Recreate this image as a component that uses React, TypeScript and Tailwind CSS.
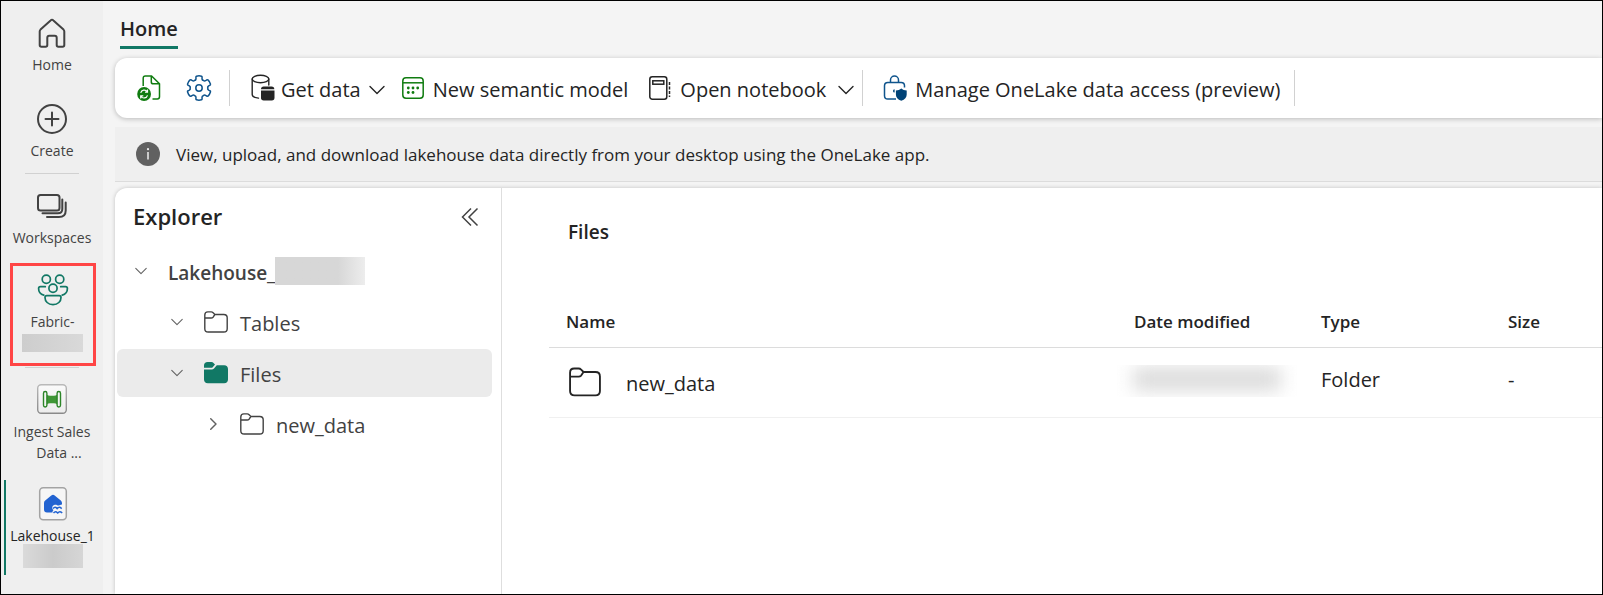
import type { ReactNode } from "react";

function HomeIcon() {
  return (
    <svg className="h-8 w-8" viewBox="0 0 32 32" fill="none" stroke="#424242" strokeWidth="2" strokeLinejoin="round">
      <path d="M14.600 3.400a2 2 0 0 1 2.800 0l10.100 9.200c.5.500.8 1.100.8 1.800V28c0 1.100-.6 1.700-1.700 1.700h-4.200c-1 0-1.700-.7-1.700-1.700v-7.300c0-1.300-.7-2-2-2h-5.400c-1.300 0-2 .7-2 2V28c0 1-.7 1.700-1.700 1.700H5.400c-1.100 0-1.700-.6-1.700-1.700V14.400c0-.7.3-1.300.8-1.800z" />
    </svg>
  );
}

function CreateIcon() {
  return (
    <svg className="h-8 w-8" viewBox="0 0 32 32" fill="none" stroke="#424242" strokeWidth="2" strokeLinecap="round">
      <circle cx="16" cy="16" r="14" />
      <path d="M16 9.500v13M9.500 16h13" />
    </svg>
  );
}

function WorkspacesIcon() {
  return (
    <svg className="h-8 w-8" viewBox="0 0 32 32" fill="none" stroke="#424242" strokeWidth="2" strokeLinecap="round">
      <rect x="2" y="5" width="21.500" height="15.500" rx="2.500" />
      <path d="M26.300 9.500v9.500c0 2.800-1.700 4.300-4.500 4.300H6.500M29.700 12.500v8c0 4.200-2.700 6.600-6.800 6.600H11" />
    </svg>
  );
}

function PeopleIcon() {
  return (
    <svg className="h-8 w-8" viewBox="0 0 32 32" fill="none" stroke="#117865" strokeWidth="1.700" strokeLinecap="round" strokeLinejoin="round">
      <circle cx="9.300" cy="5.300" r="4.100" />
      <circle cx="22.700" cy="5.300" r="4.100" />
      <circle cx="16" cy="14.200" r="4.100" />
      <path d="M8.300 12.700H3.500c-1.300 0-1.900.8-1.900 1.900 0 3.300 1.900 5.800 5.200 6.500M23.700 12.700h4.800c1.300 0 1.900.8 1.900 1.900 0 3.300-1.900 5.800-5.200 6.500" />
      <path d="M9.800 21.600h12.400c1.100 0 1.800.7 1.800 1.800 0 4-3 7.200-8 7.200s-8-3.200-8-7.200c0-1.100.7-1.800 1.800-1.800z" />
    </svg>
  );
}

function PipelineIcon() {
  return (
    <svg className="h-8 w-8" viewBox="0 0 32 32" fill="none">
      <defs>
        <linearGradient id="tileFill" x1="0" y1="0" x2="0" y2="1">
          <stop offset="0" stopColor="#fafafa" />
          <stop offset="1" stopColor="#ececec" />
        </linearGradient>
        <linearGradient id="tileEdge" x1="0" y1="0" x2="0" y2="1">
          <stop offset="0" stopColor="#b9b9b9" />
          <stop offset="1" stopColor="#8a8a8a" />
        </linearGradient>
      </defs>
      <rect x="1.700" y="1.700" width="28.600" height="28.600" rx="3.500" fill="url(#tileFill)" stroke="url(#tileEdge)" strokeWidth="1.400" />
      <path d="M10 11.500c1.500 1 3 1.300 6 1.300s4.500-.3 6-1.300v10c-1.500-1-3-1.300-6-1.300s-4.500.3-6 1.300z" fill="#3f9636" />
      <rect x="7.500" y="8.500" width="3.400" height="15.500" rx="1.700" fill="#f2f7f1" stroke="#2c8528" strokeWidth="1.400" />
      <rect x="21.100" y="8.500" width="3.400" height="15.500" rx="1.700" fill="#f2f7f1" stroke="#2c8528" strokeWidth="1.400" />
    </svg>
  );
}

function LakehouseIcon() {
  return (
    <svg className="h-9 w-8" viewBox="0 0 32 36" fill="none">
      <rect x="2.700" y="1.700" width="26.600" height="32" rx="3.500" fill="#f6f6f6" stroke="#a3a3a3" strokeWidth="1.500" />
      <path d="M14.300 9.500a2.600 2.600 0 0 1 3.400 0l6.100 5c.8.700 1.200 1.500 1.200 2.500v1.600c-1.300-.2-2 .9-3.300.9-1.600 0-2.200-1.100-4-.7-1.500.4-2.500 1.500-2.500 3 0 1 .6 1.800 1.400 2.200-.8.500-1.100 1.200-1.100 2.500H10c-1.900 0-3-1.100-3-3V17c0-1 .4-1.900 1.200-2.500z" fill="#2263d1" />
      <path d="M16 22.600c1.500-1.700 2.500-1.700 4.200 0 1.500-1.700 2.700-1.700 4.500 0M16.500 27c1.500-1.700 2.500-1.700 4.200 0 1.500-1.700 2.700-1.700 4.500 0" stroke="#2263d1" strokeWidth="1.500" />
    </svg>
  );
}

function RefreshFileIcon() {
  return (
    <svg className="h-7 w-6" viewBox="0 0 24 28" fill="none">
      <path d="M6.200 12V4.200c0-1.400.8-2.200 2.200-2.200h6.200l7.900 7.800v13c0 1.300-.8 2.200-2.200 2.200h-4.800M14.300 2.200v5.700c0 1.300.6 1.900 1.900 1.900h6" stroke="#107c10" strokeWidth="1.500" strokeLinejoin="round" />
      <circle cx="7.100" cy="20" r="6.900" fill="#107c10" />
      <path d="M3.700 18.800a3.700 3.700 0 0 1 6.500-1.300M10.500 15.500v2.600H8M10.500 21.300A3.700 3.700 0 0 1 4 22.500M3.700 24.500v-2.600h2.600" stroke="#fff" strokeWidth="1.200" />
    </svg>
  );
}

function gearPoint(radius: number, degrees: number) {
  const angle = ((degrees - 90) * Math.PI) / 180;
  return `${(16 + radius * Math.cos(angle)).toFixed(2)} ${(16 + radius * Math.sin(angle)).toFixed(2)}`;
}

const gearPath =
  [0, 60, 120, 180, 240, 300]
    .map(
      (tooth, index) =>
        `${index === 0 ? "M" : "L"}${gearPoint(12.1, tooth - 12)} Q${gearPoint(12.5, tooth)} ${gearPoint(12.1, tooth + 12)}` +
        ` Q${gearPoint(12.100, tooth + 15)} ${gearPoint(11.200, tooth + 16)} L${gearPoint(10.300, tooth + 17)}` +
        ` Q${gearPoint(8.300, tooth + 21)} ${gearPoint(8.900, tooth + 30)}` +
        ` Q${gearPoint(8.300, tooth + 39)} ${gearPoint(10.300, tooth + 43)}` +
        ` L${gearPoint(11.200, tooth + 44)} Q${gearPoint(12.100, tooth + 45)} ${gearPoint(12.100, tooth + 48)}`,
    )
    .join(" ") + "Z";

function GearIcon() {
  return (
    <svg className="h-8 w-8" viewBox="0 0 32 32" fill="none" stroke="#0f548c" strokeWidth="1.500" strokeLinejoin="round">
      <path d={gearPath} />
      <circle cx="16" cy="16" r="3.200" />
    </svg>
  );
}

function DatabaseIcon() {
  return (
    <svg className="h-7 w-6" viewBox="0 0 24 28" fill="none" stroke="#242424" strokeWidth="1.400">
      <ellipse cx="9.500" cy="5" rx="8.300" ry="3.700" />
      <path d="M1.200 5v15.500c0 1.900 2.600 3.300 6.300 3.600M17.800 5v6" strokeLinecap="round" />
      <path d="M10 15.200c0-1.800.9-2.700 2.700-2.700h7.900c1.800 0 2.700.9 2.700 2.700z" fill="#242424" stroke="none" />
      <path d="M10 16.500h13.500v7.300c0 1.800-.9 2.700-2.700 2.700h-8.100c-1.800 0-2.700-.9-2.700-2.700z" fill="#242424" stroke="none" />
    </svg>
  );
}

function SemanticModelIcon() {
  return (
    <svg className="h-6 w-6" viewBox="0 0 24 24" fill="none" stroke="#107c10" strokeWidth="1.500">
      <rect x="1.800" y="1.800" width="20.400" height="20.400" rx="3.200" />
      <path d="M1.800 6.800h20.400" />
      <g fill="#107c10" stroke="none">
        <circle cx="7.300" cy="12" r="1.400" />
        <circle cx="12" cy="12" r="1.400" />
        <circle cx="16.700" cy="12" r="1.400" />
        <circle cx="7.300" cy="16.500" r="1.400" />
        <circle cx="12" cy="16.500" r="1.400" />
      </g>
    </svg>
  );
}

function NotebookIcon() {
  return (
    <svg className="h-7 w-6" viewBox="0 0 24 28" fill="none" stroke="#242424" strokeWidth="1.500">
      <rect x="1.800" y="2.800" width="17" height="22.500" rx="2.500" />
      <rect x="4.800" y="6.800" width="11" height="3.400" />
      <path d="M21.500 8v15" strokeDasharray="3 1.500" />
    </svg>
  );
}

function LockShieldIcon() {
  return (
    <svg className="h-7 w-6" viewBox="0 0 24 28" fill="none" stroke="#0f548c" strokeWidth="1.500">
      <path d="M7.500 8.500V6a4 4 0 0 1 8 0v2.500" />
      <path d="M13 25H4.800c-2 0-3.300-1.300-3.300-3.300v-9.900c0-2 1.300-3.300 3.300-3.300h13.400c2 0 3.300 1.300 3.300 3.300v1.700" />
      <path d="M18.300 14.500c1.500 1.300 3.200 2 5.400 2v3.900c0 3-1.800 5-5.400 6.300-3.600-1.300-5.400-3.300-5.400-6.300v-3.900c2.200 0 3.900-.7 5.400-2z" fill="#004377" stroke="none" />
      <path d="M11.600 15.300v3.200a1.600 1.600 0 0 1 0-3.200z" fill="#004377" stroke="none" />
    </svg>
  );
}

function ChevronDown({ size = "mt-1 h-4 w-4" }: { size?: string }) {
  return (
    <svg className={size} viewBox="0 0 16 16" fill="none" stroke="currentColor" strokeWidth="1.400" strokeLinecap="round" strokeLinejoin="round">
      <path d="M1 4.500l7 7 7-7" />
    </svg>
  );
}

function ChevronRight() {
  return (
    <svg className="h-3 w-3" viewBox="0 0 16 16" fill="none" stroke="currentColor" strokeWidth="1.900" strokeLinecap="round" strokeLinejoin="round">
      <path d="M5 1l7 7-7 7" />
    </svg>
  );
}

function FolderIcon({ size, tone }: { size: string; tone: string }) {
  return (
    <svg className={size} viewBox="0 0 24 22" fill="none" stroke={tone} strokeWidth="1.400" strokeLinejoin="round">
      <path d="M.8 7V4C.8 2.100 2 .9 3.900.9h3.300c.8 0 1.400.3 1.900.8l1.800 1.800h8.900c2.100 0 3.400 1.300 3.400 3.300v10.900c0 2-1.300 3.300-3.400 3.300H4.200c-2.100 0-3.400-1.300-3.400-3.300zh6.400c.8 0 1.400-.3 1.900-.8l1.800-2.700" />
    </svg>
  );
}

function FolderFilledIcon() {
  return (
    <svg className="h-6 w-6" viewBox="0 0 24 22" fill="#117865">
      <path d="M0 5.800V3.500C0 1.400 1.400 0 3.500 0h4c.8 0 1.500.3 2 .9L11 2.600 8.700 5.200c-.4.400-.8.600-1.300.6z" />
      <path d="M0 7.500h7.700c.9 0 1.700-.4 2.300-1l2.800-3.200h7.400c2.300 0 3.800 1.500 3.800 3.700v10.500c0 2.300-1.500 3.800-3.800 3.800H3.800C1.500 21.300 0 19.800 0 17.500z" />
    </svg>
  );
}

function NavItem({ icon, children, className = "" }: { icon: ReactNode; children: ReactNode; className?: string }) {
  return (
    <button type="button" className={`flex w-full flex-col items-center text-sm leading-5 text-[#424242] ${className}`}>
      {icon}
      {children}
    </button>
  );
}

function TreeRow({
  label,
  icon,
  className,
  chevron,
  selected = false,
}: {
  label: string;
  icon: ReactNode;
  className: string;
  chevron: ReactNode;
  selected?: boolean;
}) {
  return (
    <li>
      <button
        type="button"
        aria-current={selected}
        className={`flex h-12 w-full items-center rounded-md text-[20px] text-[#424242] ${selected ? "bg-[#ebebeb]" : ""} ${className}`}
      >
        <span className="flex w-[33px] text-[#616161]">{chevron}</span>
        {icon}
        <span className="ml-3 pt-1">{label}</span>
      </button>
    </li>
  );
}

function Separator() {
  return <div className="h-9 w-px bg-[#d1d1d1]" />;
}

export default function App() {
  return (
    <div className="flex min-h-screen border border-black bg-[#f4f4f4] font-['Open_Sans','Noto_Sans',sans-serif] text-[#242424]">
      <nav aria-label="Workspace" className="flex w-[102px] shrink-0 flex-col items-center bg-[#efefef] pt-4">
        <NavItem icon={<HomeIcon />}>
          <span className="mt-1.5">Home</span>
        </NavItem>
        <NavItem icon={<CreateIcon />} className="mt-7">
          <span className="mt-1.5">Create</span>
        </NavItem>
        <hr className="mt-3 w-[54px] border-[#d1d1d1]" />
        <NavItem icon={<WorkspacesIcon />} className="mt-4">
          <span className="mt-1.5">Workspaces</span>
        </NavItem>
        <div className="mt-[15px] ml-px h-[103px] w-[86px] border-3 border-[#ff4545] pt-2">
          <NavItem icon={<PeopleIcon />}>
            <span className="mt-1.5">Fabric-</span>
            <span className="mt-0.5 h-[18px] w-[61px] bg-linear-to-r from-[#cdcdcd] to-[#d9d9d9]" />
          </NavItem>
        </div>
        <hr className="mt-px w-[54px] border-[#d1d1d1]" />
        <NavItem icon={<PipelineIcon />} className="mt-[15px]">
          <span className="mt-1.5 leading-[21px]">
            Ingest Sales
            <span className="block pl-3.5">Data ...</span>
          </span>
        </NavItem>
        <div className="mt-[17px] flex w-full border-l-2 border-transparent pl-px">
          <div className="w-[2px] shrink-0 bg-[#117865]" />
          <NavItem icon={<LakehouseIcon />} className="pt-1.5 pr-1 pb-[7px]">
            <span className="mt-1.5 leading-4 font-medium text-[#242424]">Lakehouse_1</span>
            <span className="h-6 w-[60px] bg-linear-to-r from-[#dadada] via-[#cbcbcb] to-[#d6d6d6]" />
          </NavItem>
        </div>
      </nav>

      <div className="flex min-w-0 grow flex-col pl-3">
        <header className="flex h-[57px] items-start pt-3 pl-[5px]">
          <button type="button" className="border-b-3 border-[#117865] pt-px pb-[2px] text-[20px] leading-[30px] font-semibold">
            Home
          </button>
        </header>

        <div role="toolbar" aria-label="Lakehouse" className="flex h-[60px] items-center rounded-l-xl bg-white pl-[22px] text-[20px] whitespace-nowrap shadow-[0_1px_5px_rgba(0,0,0,0.24)]">
          <button type="button" aria-label="Refresh">
            <RefreshFileIcon />
          </button>
          <button type="button" aria-label="Settings" className="mr-[14px] ml-[22px]">
            <GearIcon />
          </button>
          <Separator />
          <button type="button" className="ml-[21px] flex items-center">
            <DatabaseIcon />
            <span className="mr-2 ml-1.5 pt-1">Get data</span>
            <ChevronDown />
          </button>
          <button type="button" className="ml-4 flex items-center">
            <SemanticModelIcon />
            <span className="ml-2 pt-1">New semantic model</span>
          </button>
          <button type="button" className="mr-2 ml-5 flex items-center">
            <NotebookIcon />
            <span className="mr-3 ml-2 pt-1">Open notebook</span>
            <ChevronDown />
          </button>
          <Separator />
          <button type="button" className="mr-3.5 ml-5 flex items-center">
            <LockShieldIcon />
            <span className="ml-2 pt-1">Manage OneLake data access (preview)</span>
          </button>
          <Separator />
        </div>

        <div role="status" className="mt-[9px] flex h-[55px] items-center gap-4 border-b border-[#dcdcdc] bg-[#efefef] pl-[21px] text-[17px]">
          <svg className="h-6 w-6" viewBox="0 0 24 24">
            <circle cx="12" cy="12" r="12" fill="#616161" />
            <path d="M12 10v7.500" stroke="#efefef" strokeWidth="1.500" />
            <circle cx="12" cy="7.200" r="1.100" fill="#efefef" />
          </svg>
          <p className="pt-0.5">View, upload, and download lakehouse data directly from your desktop using the OneLake app.</p>
        </div>

        <div className="mt-1.5 flex grow rounded-tl-xl bg-white shadow-[0_0_4px_rgba(0,0,0,0.2)]">
          <aside className="w-[387px] shrink-0 border-r border-[#dedede] pr-[9px] pl-0.5">
            <div className="flex h-14 items-center justify-between pr-3 pl-4">
              <h2 className="text-[22px] leading-8 font-semibold">Explorer</h2>
              <button type="button" aria-label="Collapse explorer" className="pt-0.5">
                <svg className="h-5 w-5" viewBox="0 0 20 20" fill="none" stroke="#424242" strokeWidth="1.500">
                  <path d="M11 1.500L2.500 10l8.500 8.500M17.500 1.500L9 10l8.500 8.500" />
                </svg>
              </button>
            </div>
            <ul className="mt-[3px] flex flex-col gap-[3px]">
              <li>
                <button type="button" className="flex h-12 w-full items-center pl-[18px] text-[19px] font-semibold text-[#424242]">
                  <span className="flex w-[33px] text-[#616161]">
                    <ChevronDown size="h-3 w-3" />
                  </span>
                  <span className="pt-1">Lakehouse_</span>
                  <span className="h-7 w-[90px] bg-linear-to-r from-[#d7d7d7] from-70% to-[#ededed]" />
                </button>
              </li>
              <TreeRow
                label="Tables"
                className="pl-[54px]"
                chevron={<ChevronDown size="h-3 w-3" />}
                icon={<FolderIcon size="h-6 w-6" tone="#424242" />}
              />
              <TreeRow label="Files" className="pl-[54px]" chevron={<ChevronDown size="h-3 w-3" />} icon={<FolderFilledIcon />} selected />
              <TreeRow label="new_data" className="pl-[90px]" chevron={<ChevronRight />} icon={<FolderIcon size="h-6 w-6" tone="#424242" />} />
            </ul>
          </aside>

          <main className="min-w-0 grow pt-7 pl-[47px]">
            <h3 className="pl-[19px] text-[19px] leading-8 font-semibold">Files</h3>
            <table className="mt-11 w-full table-fixed text-left">
              <thead>
                <tr className="h-[55px] border-b border-[#dcdcdc] text-[17px]">
                  <th className="pt-1 pl-[17px] font-semibold">Name</th>
                  <th className="w-[187px] pt-1 pl-[17px] font-semibold">Date modified</th>
                  <th className="w-[187px] pt-1 pl-[17px] font-semibold">Type</th>
                  <th className="w-[111px] pt-1 pl-[17px] font-semibold">Size</th>
                </tr>
              </thead>
              <tbody>
                <tr className="h-[70px] border-b border-[#f0f0f0] text-[20px]">
                  <td className="pl-5">
                    <a href="#new_data" className="flex items-center gap-[25px]">
                      <FolderIcon size="h-8 w-8" tone="#242424" />
                      <span className="pt-1">new_data</span>
                    </a>
                  </td>
                  <td className="pb-0.5">
                    <div className="h-8 w-[180px] overflow-hidden px-4 pt-0.5">
                      <div className="h-6 bg-[#dcdcdc] blur-[9px]" />
                    </div>
                  </td>
                  <td className="pb-1 pl-[17px]">Folder</td>
                  <td className="pb-1 pl-[17px]">-</td>
                </tr>
              </tbody>
            </table>
          </main>
        </div>
      </div>
    </div>
  );
}
